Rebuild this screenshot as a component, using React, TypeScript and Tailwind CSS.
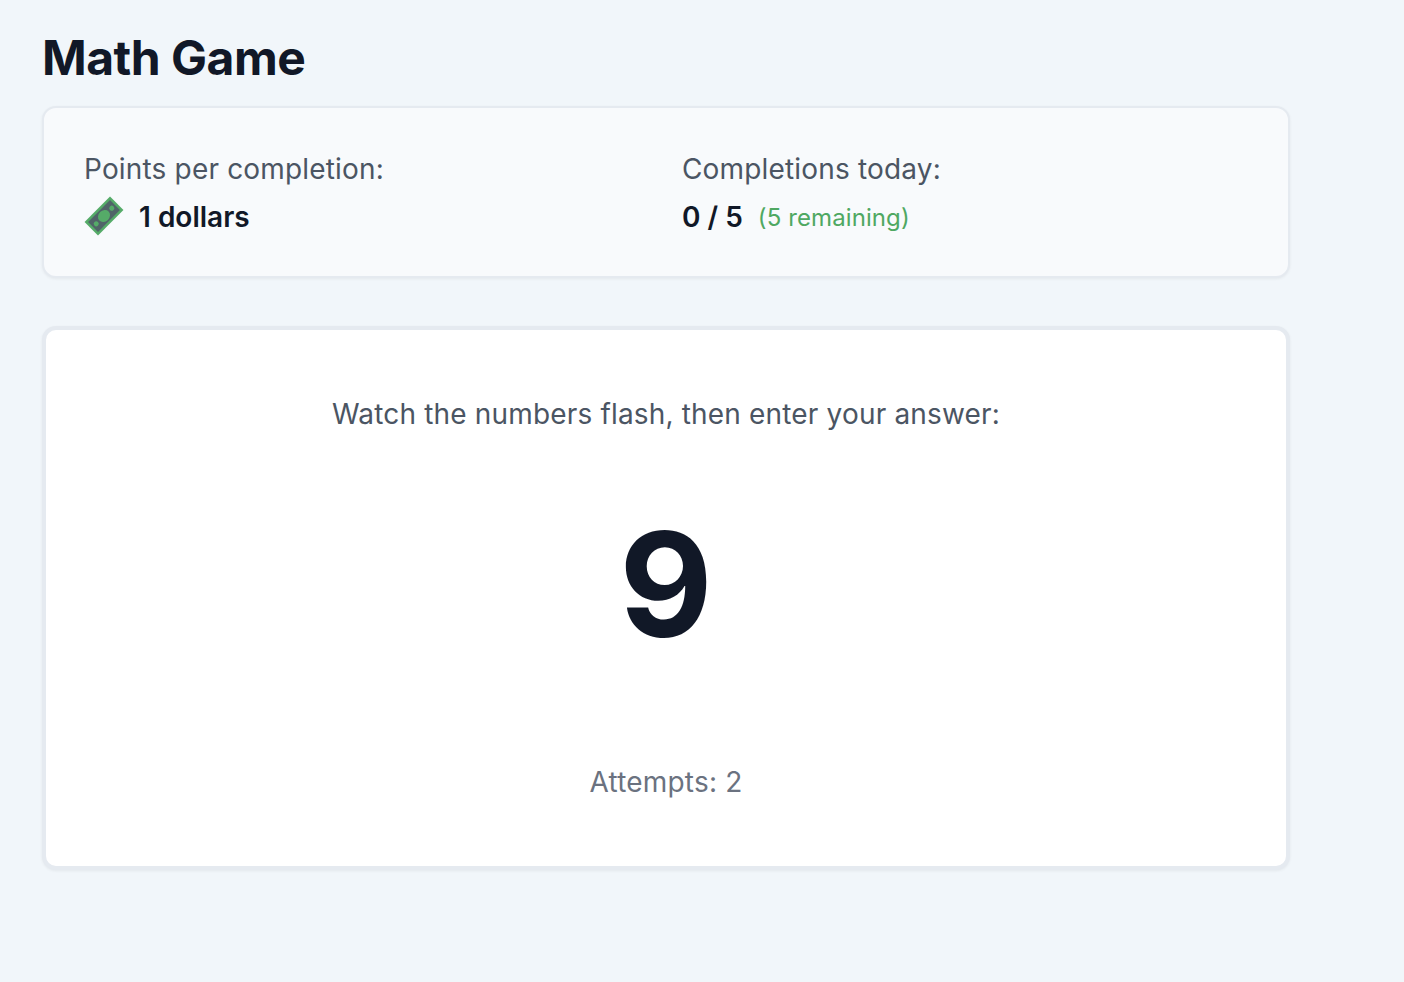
export default function App() {
  return (
    <div className="min-h-[982px] bg-[#f1f6fa] pl-[42px] pt-[28px] font-['Inter',sans-serif]">
      <div className="w-[1248px]">
        <h1 className="text-[48px] leading-[60px] font-bold text-[#111827] mb-[18px] tracking-[-0.5px]">Math Game</h1>

        <div className="h-[172px] rounded-[14px] border-2 border-[#e5eaf0] bg-[#f8fafc] px-[40px] pt-[43px] shadow-[0_1px_3px_rgba(0,0,0,0.06)] grid grid-cols-2 gap-[32px]">
          <div>
            <div className="text-[28px] leading-[36px] tracking-[0.17px] text-[#4b5563]">Points per completion:</div>
            <div className="mt-[9px] flex items-center h-[42px]">
              <svg width="40" height="40" viewBox="0 0 40 40" className="-translate-y-[1px]">
                <defs>
                  <pattern id="bill" width="2" height="2" patternUnits="userSpaceOnUse">
                    <rect width="2" height="2" fill="#4f5a68" />
                    <circle cx="1" cy="1" r="0.45" fill="#55ab68" />
                  </pattern>
                </defs>
                <g transform="rotate(-45 20 20)">
                  <rect x="2" y="10.5" width="36" height="19" fill="#55ab68" />
                  <rect x="4.5" y="13" width="31" height="14" fill="url(#bill)" />
                  <ellipse cx="20" cy="20" rx="6.5" ry="5.5" fill="#55ab68" />
                  <circle cx="9" cy="20" r="2.5" fill="#55ab68" />
                  <circle cx="31" cy="20" r="2.5" fill="#55ab68" />
                </g>
              </svg>
              <span className="ml-[15px] text-[28px] font-semibold text-[#111827]">1 dollars</span>
            </div>
          </div>
          <div>
            <div className="text-[28px] leading-[36px] tracking-[0.17px] text-[#4b5563]">Completions today:</div>
            <div className="mt-[9px] flex items-baseline h-[42px] leading-[42px]">
              <span className="text-[28px] font-semibold text-[#111827]">0 / 5</span>
              <span className="ml-[15px] -translate-y-[1px] text-[24px] tracking-[0.1px] text-[#4fa862]">(5 remaining)</span>
            </div>
          </div>
        </div>

        <div className="mt-[48px] h-[544px] rounded-[14px] border-[4px] border-[#e5eaf0] bg-white shadow-[0_1px_3px_rgba(0,0,0,0.06)] flex flex-col items-center">
          <div className="mt-[66px] text-[28px] leading-[36px] tracking-[0.17px] text-[#4b5563]">Watch the numbers flash, then enter your answer:</div>
          <div className="mt-[80px] text-[144px] leading-[144px] font-bold text-[#111827]">9</div>
          <div className="mt-[108px] text-[28px] leading-[36px] tracking-[0.2px] text-[#6b7280]">Attempts: 2</div>
        </div>
      </div>
    </div>
  );
}
